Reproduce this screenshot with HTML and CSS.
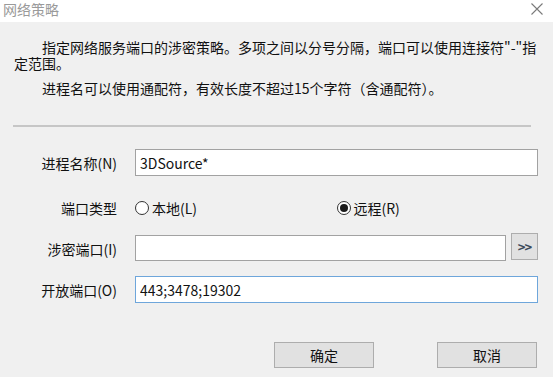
FILE: index.html
```html
<!DOCTYPE html>
<html lang="zh-CN">
  <head>
    <meta charset="UTF-8" />
    <title>网络策略</title>
    <link rel="stylesheet" href="styles.css">
  </head>
  <body>
    <div class="dialog">
      <div class="titlebar">
        <span class="title">网络策略</span>
        <span class="close">
          <svg width="12" height="12" viewBox="0 0 12 12">
            <path d="M0.5 0.5 L11.5 11.5 M11.5 0.5 L0.5 11.5" stroke="#7a7a7a" stroke-width="1.1" fill="none" />
          </svg>
        </span>
      </div>

      <div class="intro">
        <p>指定网络服务端口的涉密策略。多项之间以分号分隔，端口可以使用连接符"-"指定范围。</p>
        <p class="second">进程名可以使用通配符，有效长度不超过15个字符（含通配符）。</p>
      </div>

      <div class="separator"></div>

      <div class="form">
        <label class="label">进程名称(N)</label>
        <input class="field" type="text" value="3DSource*" />

        <label class="label type-label">端口类型</label>
        <div class="radios">
          <div class="radio-option">
            <span class="radio"></span>
            <span>本地(L)</span>
          </div>
          <div class="radio-option">
            <span class="radio checked"></span>
            <span>远程(R)</span>
          </div>
        </div>

        <label class="label">涉密端口(I)</label>
        <div class="field-row">
          <input class="field" type="text" value="" />
          <button class="small-btn">&gt;&gt;</button>
        </div>

        <label class="label">开放端口(O)</label>
        <input class="field focused" type="text" value="443;3478;19302" />
      </div>

      <div class="footer">
        <button class="btn">确定</button>
        <button class="btn">取消</button>
      </div>
    </div>
  </body>
</html>
```

FILE: styles.css
```css
* {
  margin: 0;
  padding: 0;
  box-sizing: border-box;
  font-family: "Noto Sans CJK SC", "Noto Sans", sans-serif;
}

body {
  background: #f0f0f0;
  overflow: hidden;
}

.dialog {
  width: 553px;
  height: 377px;
  background: #f0f0f0;
  color: #111;
  font-size: 14px;
}

.titlebar {
  height: 22px;
  background: #ffffff;
  display: flex;
  justify-content: space-between;
  align-items: flex-start;
  padding: 1px 10px 0 3px;
}

.title {
  color: #9a9a9a;
  font-size: 14px;
  line-height: 16px;
}

.close {
  flex: none;
  display: block;
  width: 12px;
  height: 12px;
  margin-top: 2px;
}

.close svg {
  display: block;
}

.intro {
  padding: 17px 14px 0 14px;
}

.intro p {
  text-indent: 28px;
  line-height: 16px;
}

.intro .second {
  margin-top: 9px;
}

.separator {
  height: 2px;
  background: #c6c6c6;
  margin: 29px 22px 0 13px;
}

.form {
  display: grid;
  grid-template-columns: 117px minmax(0, 1fr);
  grid-template-rows: 27px 31px 27px 27px;
  column-gap: 18px;
  row-gap: 14px;
  margin-top: 22px;
  padding-right: 15px;
}

.label {
  display: flex;
  align-items: center;
  justify-content: flex-end;
  white-space: nowrap;
}

.type-label {
  padding-top: 4px;
}

.field {
  width: 100%;
  min-width: 0;
  height: 27px;
  border: 1px solid #a2a2a2;
  background: #ffffff;
  padding: 0 4px;
  font-size: 14px;
  color: #111;
  outline: none;
}

.field.focused {
  border-color: #6ea6db;
}

.field-row {
  display: flex;
  gap: 5px;
  min-width: 0;
}

.field-row .field {
  flex: 1;
  height: 26px;
}

.small-btn {
  flex: none;
  width: 27px;
  height: 27px;
  margin-top: -2px;
  background: #e1e1e1;
  border: 1px solid #adadad;
  font-size: 13px;
  font-weight: bold;
  color: #3c4a5a;
  letter-spacing: -1px;
}

.radios {
  display: flex;
  align-items: center;
  padding-top: 4px;
}

.radio-option {
  display: flex;
  align-items: center;
  gap: 3px;
  width: 215px;
}

.radio {
  width: 14px;
  height: 14px;
  border: 1px solid #333;
  border-radius: 50%;
  background: #ffffff;
  display: flex;
  align-items: center;
  justify-content: center;
}

.radio.checked::after {
  content: "";
  width: 8px;
  height: 8px;
  border-radius: 50%;
  background: #1a1a1a;
}

.footer {
  display: flex;
  justify-content: flex-end;
  gap: 63px;
  margin-top: 39px;
  padding-right: 16px;
}

.btn {
  width: 100px;
  height: 26px;
  background: #e1e1e1;
  border: 1px solid #adadad;
  font-size: 14px;
  color: #111;
}
```
